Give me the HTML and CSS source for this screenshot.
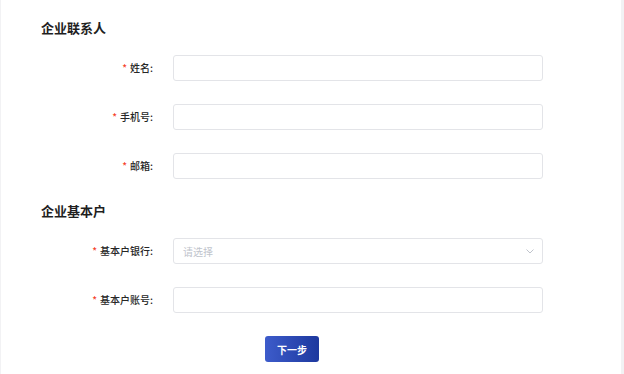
FILE: index.html
```html
<!DOCTYPE html>
<html lang="zh">
<head>
<meta charset="utf-8">
<link rel="stylesheet" href="styles.css">
</head>
<body>
<div class="card">
  <section class="section">
    <h2 class="section-title">企业联系人</h2>
    <div class="row">
      <label class="label"><span class="req">*</span>姓名:</label>
      <div class="input"></div>
    </div>
    <div class="row">
      <label class="label"><span class="req">*</span>手机号:</label>
      <div class="input"></div>
    </div>
    <div class="row">
      <label class="label"><span class="req">*</span>邮箱:</label>
      <div class="input"></div>
    </div>
  </section>
  <section class="section">
    <h2 class="section-title">企业基本户</h2>
    <div class="row">
      <label class="label"><span class="req">*</span>基本户银行:</label>
      <div class="input select">
        <span class="placeholder">请选择</span>
        <svg class="chev" width="8" height="5" viewBox="0 0 8 5"><path d="M0.5 0.5 L4 4 L7.5 0.5" fill="none" stroke="#c0c4cc" stroke-width="1"/></svg>
      </div>
    </div>
    <div class="row">
      <label class="label"><span class="req">*</span>基本户账号:</label>
      <div class="input"></div>
    </div>
  </section>
  <div class="actions">
    <button class="btn">下一步</button>
  </div>
</div>
</body>
</html>
```
FILE: styles.css
```css
html, body {
  margin: 0;
  padding: 0;
  background: #f2f2f4;
  font-family: "Noto Sans CJK SC", "Noto Sans", sans-serif;
}
.card {
  margin-left: 1px;
  width: 620px;
  height: 374px;
  background: #fff;
  box-sizing: border-box;
  padding: 18px 0 0 40px;
  display: flex;
  flex-direction: column;
  gap: 22px;
}
.section {
  display: flex;
  flex-direction: column;
  gap: 23px;
}
.section-title {
  margin: 0 0 -6px;
  font-size: 13px;
  line-height: 20px;
  font-weight: bold;
  color: #1f1f1f;
}
.row {
  display: flex;
  align-items: center;
}
.label {
  width: 112px;
  margin-right: 20px;
  text-align: right;
  font-size: 10px;
  font-weight: 500;
  color: #262626;
  line-height: 14px;
}
.req {
  color: #f5452d;
  margin-right: 3px;
}
.input {
  width: 370px;
  height: 26px;
  box-sizing: border-box;
  border: 1px solid #e3e4e8;
  border-radius: 3px;
  background: #fff;
}
.select {
  display: flex;
  align-items: center;
  justify-content: space-between;
  padding: 0 8px 0 9px;
}
.placeholder {
  font-size: 10px;
  color: #c0c4cc;
}
.chev {
  display: block;
}
.actions {
  display: flex;
  padding-left: 224px;
  margin-top: 1px;
}
.btn {
  width: 54px;
  height: 26px;
  border: none;
  border-radius: 3px;
  background: linear-gradient(90deg, #3d5ccb, #1d389e);
  color: #fff;
  font-family: "Noto Sans CJK SC", sans-serif;
  font-size: 10px;
  font-weight: bold;
  padding: 0;
}
```
